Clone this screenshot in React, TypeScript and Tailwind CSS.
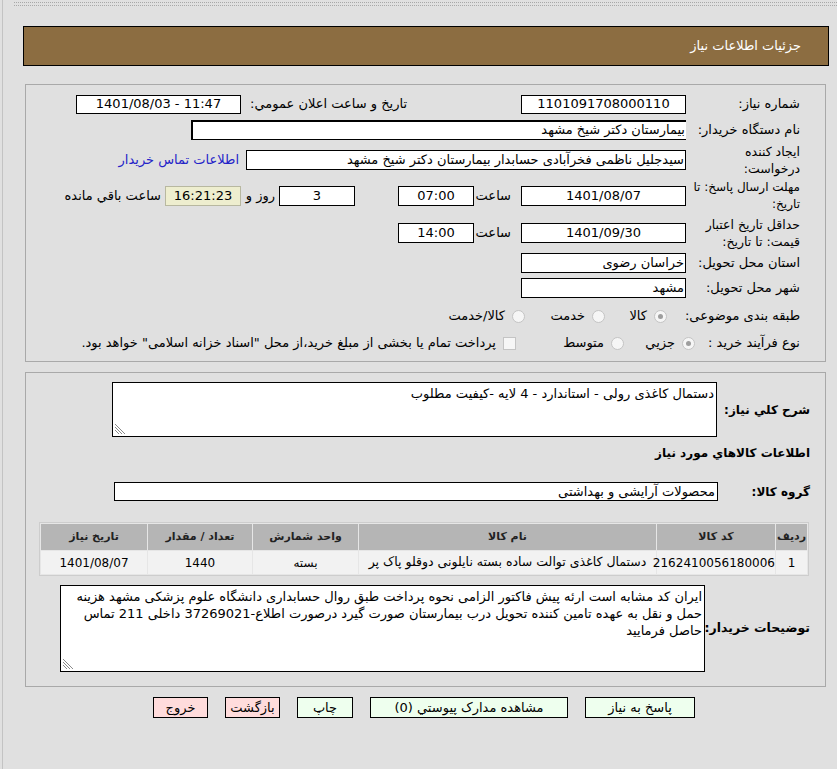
import React from 'react';

const Radio = ({ checked }: { checked?: boolean }) => (
  <span className="inline-flex w-[13px] h-[13px] shrink-0 rounded-full border border-[#c4c4c4] bg-[#f6f6f6] items-center justify-center">
    {checked && <span className="w-[5px] h-[5px] rounded-full bg-[#9e9e9e]" />}
  </span>
);

const Grip = () => (
  <svg className="absolute left-[1px] bottom-[1px]" width="12" height="12" viewBox="0 0 12 12">
    <path d="M1 1 L11 11 M1 4 L8 11 M1 7 L5 11" stroke="#8a8a8a" strokeWidth="1" fill="none" />
  </svg>
);

export default function App() {
  return (
    <div dir="rtl" className="min-h-[769px] bg-[#e0e0e0] font-['Tahoma','DejaVu_Sans',sans-serif] text-[13px] text-black">
      <div className="ml-[2px] min-h-[769px] border-l border-[#c3c3c3] pt-[2px]">
        {/* dotted line */}
        <div className="ml-[11px] h-[4px] border-t border-b border-dotted border-[#a8a8a8]" />

        {/* Header */}
        <div className="mt-[20px] ml-[20px] mr-[8px] h-[40px] bg-[#8c6d41] border border-black flex items-center pr-[27px]">
          <span className="text-white text-[13px]">جزئیات اطلاعات نیاز</span>
        </div>

        {/* Panel 1 */}
        <div className="mt-[18px] ml-[22px] mr-[11px] border border-[#a9a9a9] pt-[7px] pb-[7px] pr-[25px]">
          {/* row 1 */}
          <div className="flex items-center h-[24px]">
            <div className="w-[114px] shrink-0 whitespace-nowrap">شماره نیاز:</div>
            <div dir="ltr" className="w-[165px] h-[19px] shrink-0 bg-white border border-black flex items-center justify-center">1101091708000110</div>
            <div className="mr-[114px] w-[166px] shrink-0 whitespace-nowrap">تاریخ و ساعت اعلان عمومي:</div>
            <div dir="ltr" className="w-[165px] h-[19px] shrink-0 bg-white border border-black flex items-center justify-center">1401/08/03 - 11:47</div>
          </div>
          {/* row 2 */}
          <div className="flex items-center h-[27px]">
            <div className="w-[114px] shrink-0 whitespace-nowrap">نام دستگاه خریدار:</div>
            <div className="w-[495px] h-[20px] shrink-0 bg-white border border-black border-t-2 border-r-0 border-l-2 flex items-center pr-[1px]">بیمارستان دکتر شیخ مشهد</div>
          </div>
          {/* row 3 */}
          <div className="flex items-center h-[34px]">
            <div className="w-[114px] shrink-0 leading-[17px] text-[12.5px]">ایجاد کننده<br />درخواست:</div>
            <div className="w-[440px] h-[20px] shrink-0 bg-white border border-black flex items-center pr-[1px] whitespace-nowrap overflow-hidden">سیدجلیل ناظمی فخرآبادی حسابدار بیمارستان دکتر شیخ مشهد</div>
            <a className="mr-[7px] text-[#2323c8] whitespace-nowrap">اطلاعات تماس خریدار</a>
          </div>
          {/* row 4 */}
          <div className="flex items-center h-[38px]">
            <div className="w-[114px] shrink-0 leading-[17px] whitespace-nowrap text-[12px]">مهلت ارسال پاسخ: تا<br />تاریخ:</div>
            <div dir="ltr" className="w-[165px] h-[20px] shrink-0 bg-white border border-black flex items-center justify-center">1401/08/07</div>
            <div className="w-[47px] shrink-0 pr-[10px]">ساعت</div>
            <div dir="ltr" className="w-[76px] h-[20px] shrink-0 bg-white border border-black flex items-center justify-center">07:00</div>
            <div className="w-[43px] shrink-0" />
            <div dir="ltr" className="w-[76px] h-[20px] shrink-0 bg-white border border-black flex items-center justify-center">3</div>
            <div className="w-[38px] shrink-0 pr-[4px] whitespace-nowrap">روز و</div>
            <div dir="ltr" className="w-[76px] h-[20px] shrink-0 bg-[#eeeecf] border border-[#b8b8a0] flex items-center justify-center">16:21:23</div>
            <div className="mr-[4px] whitespace-nowrap">ساعت باقي مانده</div>
          </div>
          {/* row 5 */}
          <div className="flex items-center h-[36px]">
            <div className="w-[114px] shrink-0 leading-[17px] whitespace-nowrap text-[12.5px]">حداقل تاریخ اعتبار<br />قیمت: تا تاریخ:</div>
            <div dir="ltr" className="w-[165px] h-[20px] shrink-0 bg-white border border-black flex items-center justify-center">1401/09/30</div>
            <div className="w-[47px] shrink-0 pr-[10px]">ساعت</div>
            <div dir="ltr" className="w-[76px] h-[20px] shrink-0 bg-white border border-black flex items-center justify-center">14:00</div>
          </div>
          {/* row 6 */}
          <div className="flex items-center h-[24px]">
            <div className="w-[114px] shrink-0 whitespace-nowrap">استان محل تحویل:</div>
            <div className="w-[165px] h-[20px] shrink-0 bg-white border border-black flex items-center pr-[1px]">خراسان رضوی</div>
          </div>
          {/* row 7 */}
          <div className="flex items-center h-[25px]">
            <div className="w-[114px] shrink-0 whitespace-nowrap">شهر محل تحویل:</div>
            <div className="w-[165px] h-[20px] shrink-0 bg-white border border-black flex items-center pr-[1px]">مشهد</div>
          </div>
          {/* row 8 */}
          <div className="flex items-center h-[32px]">
            <div className="w-[133px] shrink-0 whitespace-nowrap">طبقه بندی موضوعی:</div>
            <div className="w-[62px] shrink-0 flex items-center gap-[7px]"><Radio checked /><span>کالا</span></div>
            <div className="w-[80px] shrink-0 flex items-center gap-[7px]"><Radio /><span>خدمت</span></div>
            <div className="flex items-center gap-[7px]"><Radio /><span>کالا/خدمت</span></div>
          </div>
          {/* row 9 */}
          <div className="flex items-center h-[22px]">
            <div className="w-[105px] shrink-0 whitespace-nowrap">نوع فرآیند خرید :</div>
            <div className="w-[71px] shrink-0 flex items-center gap-[7px]"><Radio checked /><span>جزيي</span></div>
            <div className="w-[108px] shrink-0 flex items-center gap-[7px]"><Radio /><span>متوسط</span></div>
            <div className="flex items-center gap-[7px] whitespace-nowrap">
              <span className="w-[13px] h-[13px] shrink-0 border border-[#c4c4c4] bg-[#f6f6f6]" />
              <span>پرداخت تمام یا بخشی از مبلغ خرید،از محل "اسناد خزانه اسلامی" خواهد بود.</span>
            </div>
          </div>
        </div>

        {/* Panel 2 */}
        <div className="mt-[10px] ml-[22px] mr-[11px] border border-[#a9a9a9] pt-[9px] pb-[14px] pr-[15px]">
          <div className="flex items-center">
            <div className="w-[93px] shrink-0 font-bold text-[12px] whitespace-nowrap">شرح کلي نیاز:</div>
            <div className="relative w-[605px] h-[55px] shrink-0 bg-white border border-black pr-[2px] pt-[2px] leading-[17px]">
              دستمال کاغذی رولی - استاندارد - 4 لایه -کیفیت مطلوب
              <Grip />
            </div>
          </div>
          <div className="mt-[8px] leading-[16px] font-bold text-[12px]">اطلاعات کالاهاي مورد نیاز</div>
          <div className="mt-[21px] flex items-center">
            <div className="w-[92px] shrink-0 font-bold text-[12px] whitespace-nowrap">گروه کالا:</div>
            <div className="w-[604px] h-[19px] shrink-0 bg-white border border-black flex items-center pr-[2px]">محصولات آرایشی و بهداشتی</div>
          </div>

          <table className="mt-[21px] mr-[1px] w-[769px] table-fixed border-separate border-spacing-[1px] border border-[#cdcdcd] bg-[#e6e6e6] text-center text-[12px]">
            <colgroup>
              <col className="w-[31px]" />
              <col className="w-[118px]" />
              <col className="w-[297px]" />
              <col className="w-[105px]" />
              <col className="w-[104px]" />
              <col className="w-[106px]" />
            </colgroup>
            <thead>
              <tr className="h-[26px] text-[11px] font-bold text-[#222]">
                <td className="bg-[#b5b5b5]">ردیف</td>
                <td className="bg-[#b5b5b5]">کد کالا</td>
                <td className="bg-[#b5b5b5]">نام کالا</td>
                <td className="bg-[#b5b5b5]">واحد شمارش</td>
                <td className="bg-[#b5b5b5]">تعداد / مقدار</td>
                <td className="bg-[#b5b5b5]">تاریخ نیاز</td>
              </tr>
            </thead>
            <tbody>
              <tr className="h-[23px]">
                <td className="bg-[#f2f2f2]">1</td>
                <td className="bg-[#f2f2f2]">2162410056180006</td>
                <td className="bg-[#f2f2f2] whitespace-nowrap overflow-hidden text-[12.5px]">دستمال کاغذی توالت ساده بسته نایلونی دوقلو پاک پر</td>
                <td className="bg-[#f2f2f2]">بسته</td>
                <td className="bg-[#f2f2f2]">1440</td>
                <td className="bg-[#f2f2f2]">1401/08/07</td>
              </tr>
            </tbody>
          </table>

          <div className="mt-[9px] flex items-center">
            <div className="w-[105px] shrink-0 font-bold text-[12.5px] whitespace-nowrap">توضیحات خریدار:</div>
            <div className="relative w-[645px] h-[87px] shrink-0 bg-white border border-black pr-[2px] pl-[2px] pt-[2px] leading-[17px]">
              ایران کد مشابه است  ارئه پیش فاکتور الزامی نحوه پرداخت طبق روال حسابداری دانشگاه علوم پزشکی مشهد هزینه حمل و نقل به عهده تامین کننده تحویل درب بیمارستان صورت گیرد درصورت اطلاع-37269021 داخلی 211 تماس حاصل فرمایید
              <Grip />
            </div>
          </div>
        </div>

        {/* Buttons */}
        <div className="mt-[10px] flex gap-[17px] pr-[142px] text-[13px]">
          <button className="w-[110px] h-[21px] border border-black bg-[#eeffee]">پاسخ به نیاز</button>
          <button className="w-[198px] h-[21px] border border-black bg-[#eeffee]">مشاهده مدارک پیوستي (0)</button>
          <button className="w-[56px] h-[21px] border border-black bg-[#eeffee]">چاپ</button>
          <button className="w-[55px] h-[21px] border border-black bg-[#ffdcdc]">بازگشت</button>
          <button className="w-[55px] h-[21px] border border-black bg-[#ffdcdc]">خروج</button>
        </div>
      </div>
    </div>
  );
}
